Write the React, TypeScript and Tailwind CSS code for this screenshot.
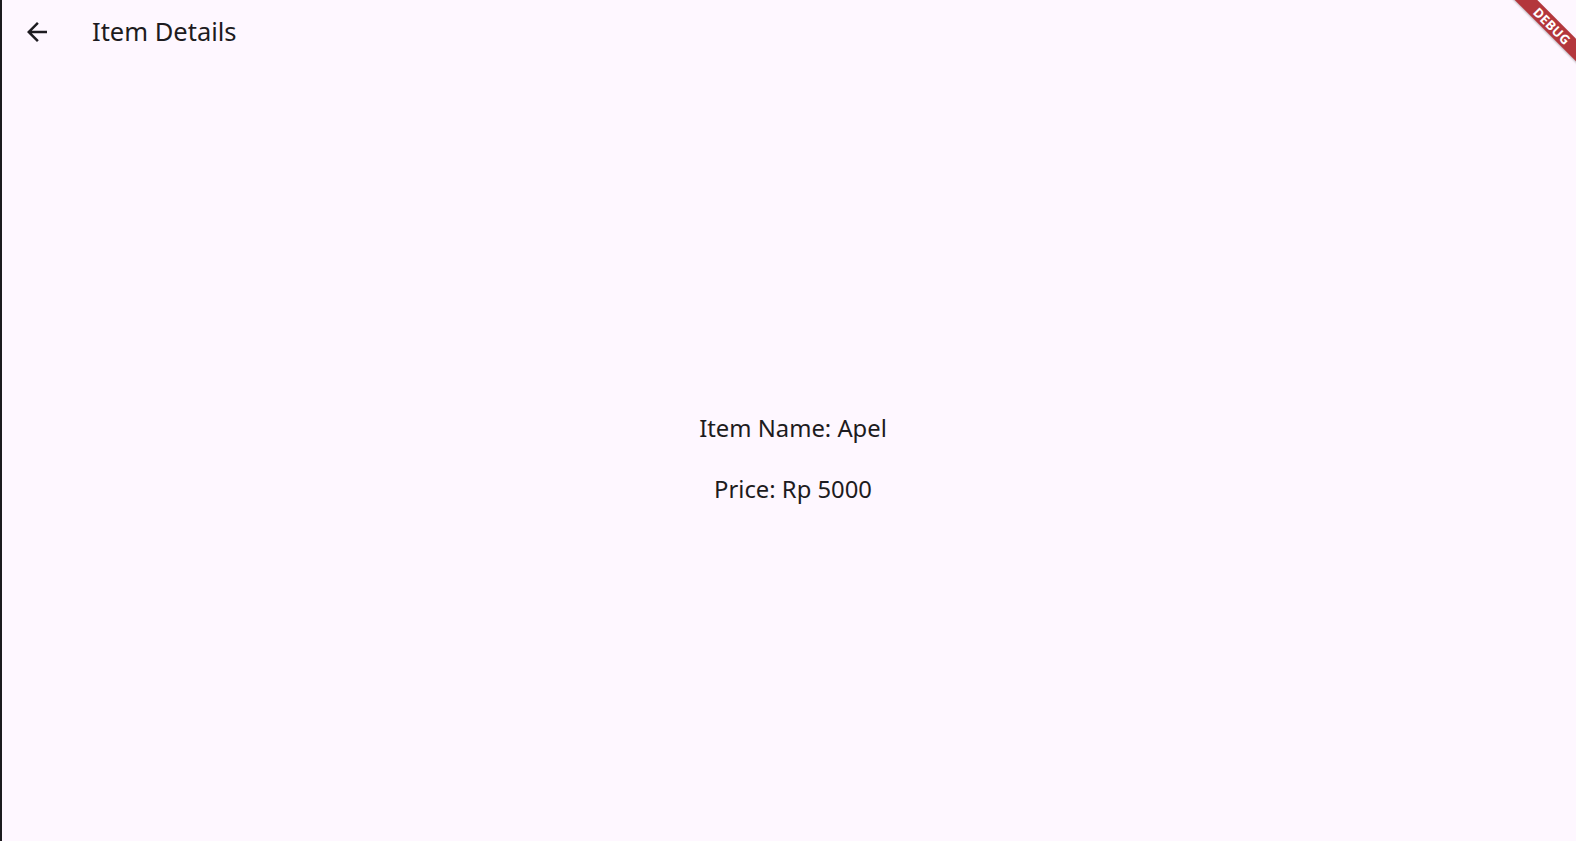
import React from "react";

const ArrowBack = () => (
  <svg width="30" height="30" viewBox="0 0 24 24" fill="#1d1b20">
    <path d="M20 11H7.83l5.59-5.59L12 4l-8 8 8 8 1.41-1.41L7.83 13H20v-2z" />
  </svg>
);

const App = () => {
  return (
    <div className="relative flex h-[841px] w-full flex-col overflow-hidden border-l-2 border-[#1c1b1f] bg-[#fef7ff] font-['Noto_Sans',sans-serif] text-[#1d1b20]">
      {/* App bar */}
      <header className="flex h-[64px] shrink-0 items-center">
        <button className="ml-[20px] flex h-[30px] w-[30px] items-center justify-center">
          <ArrowBack />
        </button>
        <h1 className="ml-[40px] text-[25.5px] leading-none">Item Details</h1>
      </header>

      {/* Body */}
      <main className="flex flex-1 flex-col items-center justify-center gap-[35px] pl-[8px] pt-[12px] text-[23.8px] leading-[26px]">
        <p>Item Name: Apel</p>
        <p>Price: Rp 5000</p>
      </main>

      {/* Debug banner */}
      <div className="pointer-events-none absolute right-0 top-0 h-[80px] w-[80px] overflow-hidden">
        <div className="absolute left-[-4px] top-[18px] flex h-[16px] w-[120px] rotate-45 items-center justify-center bg-[#b3363c] shadow-[0_1px_2px_rgba(0,0,0,0.25)]">
          <span className="text-[13px] font-bold leading-none tracking-[0.3px] text-white font-['Noto_Sans',sans-serif]">
            DEBUG
          </span>
        </div>
      </div>
    </div>
  );
};

export default App;
